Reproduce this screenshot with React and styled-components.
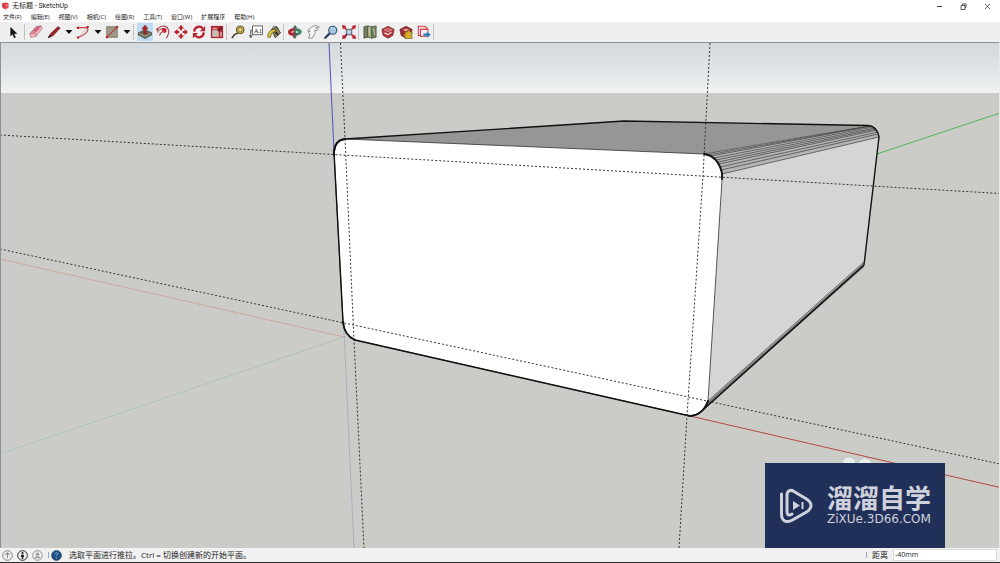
import React from "react";
import styled, { createGlobalStyle } from "styled-components";

const GlobalStyle = createGlobalStyle`
  * { box-sizing: border-box; }
  body { margin: 0; background: #ffffff; }
  button, input { font: inherit; color: inherit; }
`;

const Window = styled.div`
  display: flex;
  flex-direction: column;
  height: 100vh;
  font-family: "Open Sans", "Noto Sans CJK SC", sans-serif;
  color: #222222;
  border-bottom: 1px solid #2b2b2f;
`;

const TitleBar = styled.header`
  display: flex;
  align-items: center;
  gap: 3px;
  height: 12px;
  flex: none;
  padding: 0 1px;
  background: #ffffff;
`;

const Title = styled.h1`
  flex: 1;
  margin: 0;
  font-family: Roboto, "Noto Sans CJK SC", sans-serif;
  font-size: 7px;
  line-height: 12px;
  font-weight: 400;
`;

const WindowControls = styled.div`
  display: flex;
`;

const WindowButton = styled.button`
  display: grid;
  place-items: center;
  width: 24px;
  height: 12px;
  padding: 0;
  border: 0;
  background: transparent;
`;

const MenuBar = styled.nav`
  display: flex;
  gap: 9px;
  height: 10px;
  flex: none;
  padding-left: 3px;
  background: #ffffff;
`;

const MenuButton = styled.button`
  padding: 0;
  border: 0;
  background: transparent;
  font-size: 6px;
  line-height: 10px;
  white-space: nowrap;
`;

const ToolBar = styled.div`
  display: flex;
  align-items: center;
  height: 20px;
  flex: none;
  padding-left: 5px;
  background: #efefef;
`;

const ToolGroup = styled.div`
  display: flex;
  gap: 2px;
  padding-right: ${(p) => p.$end || 0}px;
`;

const Separator = styled.span`
  width: 1px;
  height: 16px;
  margin: 0 3px 0 1px;
  background: #c4c4c4;
`;

const ToolButton = styled.button`
  display: grid;
  place-items: center;
  width: ${(p) => (p.$narrow ? 9 : 16)}px;
  height: 18px;
  padding: 0;
  border: 0;
  background: ${(p) => (p.$active ? "#bfdcf3" : "transparent")};
`;

const Viewport = styled.main`
  position: relative;
  flex: 1;
  min-height: 0;
  border: solid #8f9294;
  border-width: 1px 0 0 1px;
  border-right: 1px solid #e9e9e8;
  background: #cbccc7;
`;

const Scene = styled.svg`
  display: block;
  width: 100%;
  height: 100%;
`;

const Brand = styled.aside`
  position: absolute;
  right: 54px;
  bottom: 0;
  display: flex;
  align-items: center;
  gap: 13px;
  width: 180px;
  height: 85px;
  padding-left: 14px;
  background: #213058;
  color: #cfd2dc;
`;

const BrandText = styled.div`
  display: flex;
  flex-direction: column;
  padding-bottom: 2px;
  gap: 3px;
`;

const BrandName = styled.strong`
  font-family: "Noto Sans CJK SC", sans-serif;
  font-size: 26px;
  line-height: 26px;
  font-weight: 700;
`;

const BrandSite = styled.span`
  font-family: "DejaVu Sans", sans-serif;
  font-size: 12px;
  line-height: 12px;
`;

const StatusBar = styled.footer`
  display: flex;
  align-items: center;
  height: 14px;
  flex: none;
  padding-right: 3px;
  background: #f1f1f2;
  font-size: 8px;
  line-height: 14px;
`;

const StatusButton = styled.button`
  display: grid;
  place-items: center;
  width: 15px;
  height: 14px;
  padding: 0;
  border: 0;
  background: transparent;
`;

const StatusMessage = styled.p`
  flex: 1;
  margin: 0;
  padding-left: 5px;
`;

const StatusDivider = styled.span`
  width: 1px;
  height: 6px;
  margin-left: 3px;
  background: #9aa5b5;
`;

const Measure = styled.label`
  display: flex;
  align-items: center;
  gap: 5px;
  padding-left: 5px;
`;

const MeasureInput = styled.input`
  width: 104px;
  height: 12px;
  padding: 0 1px;
  border: 1px solid #dcdcdc;
  background: #ffffff;
  font-size: 7px;
  outline: 0;
`;

const R = "#b8202c";

const art = {
  logo: (
    <>
      <path d="M2 3L9 1l6 2v8l-6 4-6-3z" fill="#d8232b" />
      <path d="M5 5l5-1 3 1-4 2v2l4-2v3l-4 3-4-2" fill="none" stroke="#fff" strokeWidth="1" opacity=".7" />
    </>
  ),
  select: <path d="M5 2v11l2.500-2.300L9.200 15l2-.9-1.800-4H13z" fill="#151515" />,
  eraser: (
    <>
      <path d="M1 10L8 2l6-1 1 3-7 9-6 1z" fill="#d98a98" stroke="#8d4a58" strokeWidth=".8" />
      <path d="M1.500 10.500L7 10l7.500-8.500L15 4l-7 9-6 1z" fill="#efb3be" />
      <path d="M7 10l1 3" stroke="#a3606d" strokeWidth=".7" />
      <path d="M5 7.500L9.500 3l3-.5L8 7.500z" fill="#c6566d" />
    </>
  ),
  pencil: (
    <>
      <path d="M2 14l2-4 8.500-8 2.500 1.500L7 12z" fill="#a3202a" stroke="#571318" strokeWidth=".8" />
      <path d="M1 15l1.500-3.500L5 13.500z" fill="#1a1a1a" />
    </>
  ),
  arc: (
    <>
      <path d="M2 3h9c6 1 1 8-8 11" fill="none" stroke="#c63b46" strokeWidth="1.300" />
      <path d="M13 3L3 14" stroke="#b58a8a" strokeWidth=".7" />
      <path d="M1 2h2.500v2.500H1zM12 1h2.500v2.500H12zM1 13h2.500v2.500H1z" fill={R} />
    </>
  ),
  rect: (
    <>
      <path d="M2 2h12v12H2z" fill="#9f9a8b" stroke="#77715e" />
      <path d="M2 14L14 2" stroke={R} strokeWidth="1.200" />
      <path d="M1 12.500h2.500V15H1zM12.500 1H15v2.500h-2.500z" fill={R} />
    </>
  ),
  push: (
    <>
      <path d="M0 9l8-3.500L16 9v2l-8 4.500L0 11z" fill="#6f6a55" stroke="#35342b" strokeWidth=".7" />
      <path d="M1 9.500l7 3.500 7-3.500" fill="none" stroke="#c4bea5" strokeWidth=".8" />
      <path d="M8 0l3.500 4.500H9.500V10h-3V4.500h-2z" fill={R} stroke="#641018" strokeWidth=".5" />
    </>
  ),
  follow: (
    <>
      <path d="M1 6c3-6 11-6 13-1s-1 7-2 10" fill="none" stroke="#a8464d" strokeWidth="1.300" />
      <path d="M2 9c2-5 6-6 9-4" fill="none" stroke="#998b83" strokeWidth="1.300" />
      <path d="M4 12c1-3 3-5 6-4" fill="none" stroke="#a8464d" strokeWidth="1.300" />
      <path d="M6 5c3-3 7-1 6 2s-3 2-4 1z" fill="#cf2430" />
      <path d="M0 4l3 0-1 4z" fill={R} />
    </>
  ),
  move: (
    <>
      <path d="M8 0l3.500 4h-7zM8 16l3.500-4h-7zM0 8l4-3.500v7zM16 8l-4-3.500v7z" fill={R} />
      <path d="M8 3v3M8 10v3M3 8h3M10 8h3" stroke={R} strokeWidth="2.400" />
    </>
  ),
  rotate: (
    <>
      <path d="M2.500 7.500c.5-6 7.500-7 9.500-3.500M13.500 8.500c-.5 6-7.500 7-9.500 3.500" fill="none" stroke={R} strokeWidth="2.600" />
      <path d="M15 1v6H9zM1 15V9h6z" fill={R} />
    </>
  ),
  scale: (
    <>
      <path d="M1 1h14v14H1z" fill="#b02833" />
      <path d="M2.500 6H10v7.500H2.500z" fill="#c9beb1" />
      <path d="M3 3h5v2H3zM11.500 8h2v5h-2z" fill="#d9a4a4" />
      <path d="M9 7l4.500-4.500" stroke="#5e1118" strokeWidth="1.500" />
    </>
  ),
  tape: (
    <>
      <path d="M8 9l-4 2-3 4" fill="none" stroke="#463e22" strokeWidth="1.800" />
      <circle cx="10.500" cy="5.500" r="4.500" fill="#bda84c" stroke="#554920" />
      <circle cx="10.500" cy="5.500" r="2" fill="#ece1ad" stroke="#75682d" strokeWidth=".6" />
    </>
  ),
  text: (
    <>
      <path d="M4 1h11.500v10H4z" fill="#fff" stroke="#444" strokeWidth=".9" />
      <text x="5.500" y="9" fontFamily="Liberation Serif, serif" fontSize="8" fill="#222">A1</text>
      <path d="M4 6H2v8M.5 11.500L2 14.500l1.500-3" fill="none" stroke="#333" strokeWidth=".9" />
    </>
  ),
  paint: (
    <>
      <path d="M5 5l6-3 4.500 7-6 5.500z" fill="#8d8256" stroke="#39351f" />
      <path d="M1 14c-1-6 4-10 10-8.500L8 8l-3 2-1 4z" fill="#dcc63c" stroke="#474016" strokeWidth=".7" />
      <path d="M9.500 8l3 3" stroke="#222" strokeWidth="2" />
      <path d="M6 4c1-4 6-3 7 1" fill="none" stroke="#444" strokeWidth=".9" />
    </>
  ),
  orbit: (
    <>
      <path d="M9 4c8 0 9 7 0 8V9.500c4-.5 4-2.500 0-3z" fill="#3d8a67" stroke="#235541" strokeWidth=".5" />
      <path d="M7 4C-2 4-2 12 6 12v2.500l4-3.500-4-3.500v2C2 9 3 6.500 7 6.500z" fill={R} stroke="#641018" strokeWidth=".4" />
      <path d="M8 0l2.500 3.500H9V13H7V3.500H5.500z" fill="#4b5f58" />
      <path d="M6 13h4l-2 3z" fill="#4b5f58" />
    </>
  ),
  pan: (
    <path
      d="M2 6l5-4 4-1.500 4 1.500-.5 1.500L11 3l2.500 2.500-1 1L10 5.500l.5 4L7 15H3l1.500-4.500L3 8.500l2-2L2.500 7.500z"
      fill="#f9f8f5"
      stroke="#6b6865"
      strokeWidth=".8"
    />
  ),
  zoom: (
    <>
      <path d="M7 9l-5.500 5.500" stroke="#293c62" strokeWidth="2.600" strokeLinecap="round" />
      <circle cx="10" cy="6" r="4.600" fill="#a9c8e2" stroke="#395474" strokeWidth="1.300" />
    </>
  ),
  extents: (
    <>
      <path d="M7 9l-4 5" stroke="#32425c" strokeWidth="2" />
      <circle cx="8" cy="8" r="3.300" fill="#b8d0e0" stroke="#445b75" />
      <path d="M0 0l5 1-1.300 1.300L6 4.500 4.500 6 2.300 3.700 1 5zM16 0l-1 5-1.300-1.300L11.500 6 10 4.500l2.300-2.200L11 1zM16 16l-5-1 1.300-1.300-2.300-2.200 1.500-1.500 2.200 2.300L15 11zM0 16l1-5 1.300 1.300L4.500 10 6 11.500l-2.300 2.200L5 15z" fill={R} />
    </>
  ),
  map: (
    <>
      <path d="M1 2l4.500-1v13L1 15z" fill="#6f7f5b" stroke="#3e4c35" strokeWidth=".8" />
      <path d="M5.500 1l4.500 1v13l-4.500-1z" fill="#a3ab86" stroke="#3e4c35" strokeWidth=".8" />
      <path d="M10 2l5-1v13l-5 1z" fill="#75855f" stroke="#3e4c35" strokeWidth=".8" />
      <path d="M7 3v9M12 4l1.500 7" stroke="#d8d6b0" />
    </>
  ),
  warehouse: (
    <>
      <path d="M1 5l7-3.500L15 5l-1.500 7L8 15l-5.500-3z" fill="#b5323b" stroke="#66272b" strokeWidth=".8" />
      <path d="M3 5.500L8 3.500l5 2-5 2.500z" fill="#e2a49d" />
      <path d="M4 9l4 2 4-3" fill="none" stroke="#f4e4df" strokeWidth="1.300" />
      <path d="M6 5.500l4 .3" stroke="#8a1e26" strokeWidth="1.200" />
    </>
  ),
  extension: (
    <>
      <path d="M1 5l7-3.500L15 5l-1.500 7L8 15l-5.500-3z" fill="#a32b31" stroke="#5e2025" strokeWidth=".8" />
      <path d="M4 5.500l4-1.500 4 1.500-4 2z" fill="#dfa29a" />
      <path d="M7 8h2.500c-.5-2.500 3.500-2.500 3 0H15v3c-2 0-2 2 0 2v2.500H7V13c-2 .500-2-3 0-2.500z" fill="#d6af29" stroke="#674f16" strokeWidth=".7" />
    </>
  ),
  layout: (
    <>
      <path d="M1.500 1.500H9l3 2.500v8H1.500z" fill="#f7dfdf" stroke="#d6404b" strokeWidth="1.200" />
      <path d="M4 5h8.500v8H4z" fill="#fbeeee" stroke="#d6404b" strokeWidth="1.200" />
      <path d="M7 9.500h4V7l5 4-5 4v-2.500H7z" fill="#2878ba" stroke="#fff" strokeWidth=".4" />
    </>
  ),
  caret: <path d="M1 4h14L8 12z" fill="#111" />,
};

const Icon = ({ name, size = 14 }) => (
  <svg width={size} height={size} viewBox="0 0 16 16" aria-hidden="true">
    {art[name]}
  </svg>
);

const Tool = ({ name, label, active, narrow }) => (
  <ToolButton type="button" aria-label={label} $active={active} $narrow={narrow}>
    <Icon name={name} size={narrow ? 8 : 14} />
  </ToolButton>
);

const menus = ["文件(F)", "编辑(E)", "视图(V)", "相机(C)", "绘图(R)", "工具(T)", "窗口(W)", "扩展程序", "帮助(H)"];

const editTools = [["push", "推/拉"], ["follow", "路径跟随"], ["move", "移动"], ["rotate", "旋转"], ["scale", "缩放"]];
const markTools = [["tape", "卷尺"], ["text", "文字"], ["paint", "材质"]];
const cameraTools = [["orbit", "环绕观察"], ["pan", "平移"], ["zoom", "缩放视图"], ["extents", "充满视窗"]];
const libraryTools = [["map", "地图"], ["warehouse", "模型库"], ["extension", "扩展库"], ["layout", "布局"]];

const bevelLines = [
  [704, 154, 868, 126], [708, 155, 870, 126], [711, 156, 872, 126], [714, 158, 873, 127],
  [716, 160, 875, 128], [718, 162, 876, 129], [719, 164, 877, 130], [720, 167, 878, 132],
  [721, 170, 878, 134], [722, 174, 879, 137],
];

const guides = ["M0 135L1000 193.500", "M0 249L1000 464", "M340.500 43L345 139L354 340L364 548", "M710 43L703 176L687 416L679 548"];

const Model = () => (
  <Scene viewBox="1 43 998 505" preserveAspectRatio="xMidYMid slice" role="img" aria-label="圆角长方体模型">
    <defs>
      <linearGradient id="sky" x1="0" y1="0" x2="0" y2="1">
        <stop offset="0" stopColor="#d3d9dc" />
        <stop offset=".6" stopColor="#e1e6e8" />
        <stop offset="1" stopColor="#f1f3f2" />
      </linearGradient>
    </defs>
    <path d="M0 43h1000v50H0z" fill="url(#sky)" />
    <path d="M0 93h1000v455H0z" fill="#cbccc7" />
    <g fill="none" strokeWidth="1">
      <path d="M329 43L334 152" stroke="#5552b4" />
      <path d="M344 330L354 548" stroke="#8f8fb8" strokeDasharray="1 1" />
      <path d="M0 259L344 337" stroke="#cf857e" strokeDasharray="1 1" />
      <path d="M690 416L1000 487.500" stroke="#b94744" />
      <path d="M344 337L0 454" stroke="#93b9ad" strokeDasharray="1 1" />
      <path d="M877 154L1000 113" stroke="#55b455" />
    </g>
    <path d="M345 139L624 121L868 125.500L704 155z" fill="#969696" />
    <path d="M704 154L868 125.500Q877 126 879 137L864 265L707 406L722 180z" fill="#d5d5d5" />
    <path d="M704 154L868 125.500Q877 126 879 137L722 174Q718 157 704 154z" fill="#b4b4b4" />
    <path d="M864 263L708 402L700 413L864 267z" fill="#777777" />
    <g stroke="#3d3d3d" strokeWidth=".7">
      {bevelLines.map(([x1, y1, x2, y2]) => (
        <line key={y1} x1={x1} y1={y1} x2={x2} y2={y2} />
      ))}
    </g>
    <path
      d="M345 139L704 154Q718 156 722 173V180L708 401Q703 415 690 416L355 340Q344 335 343 322L334 152Q335 140 345 139z"
      fill="#ffffff"
      stroke="#303030"
      strokeWidth=".8"
    />
    <g fill="none" stroke="#111111" strokeWidth="1.400" strokeLinecap="round" strokeLinejoin="round">
      <path d="M345 139L624 121L868 125.500Q877 126 879 137L864 265L704 409" />
      <path d="M345 139Q335 140 334 152L343 322Q344 335 355 340L690 416Q703 415 708 401" />
      <path d="M704 154Q718 156 722 173V179" strokeWidth="1.800" />
      <path d="M334 155V152Q335 140 345 139M343 322Q344 335 355 340M687 415L690 416Q703 415 708 401" strokeWidth="1.800" />
      <path d="M864 262L708 401" strokeWidth=".6" />
    </g>
    <g fill="none" stroke="#333333" strokeWidth="1" strokeDasharray="2 2">
      {guides.map((d) => (
        <path key={d} d={d} />
      ))}
    </g>
    <g fill="#e8eeee" stroke="#b3bfbe" strokeWidth=".7">
      <circle cx="849" cy="464" r="7" />
      <circle cx="865" cy="465" r="7" />
    </g>
  </Scene>
);

const Round = ({ fill = "none", stroke, children }) => (
  <svg width="11" height="11" viewBox="0 0 16 16" aria-hidden="true">
    <circle cx="8" cy="8" r="7" fill={fill} stroke={stroke} strokeWidth="1.300" />
    {children}
  </svg>
);

export default function App() {
  return (
    <Window>
      <GlobalStyle />
      <TitleBar>
        <Icon name="logo" size={8} />
        <Title>无标题 - SketchUp</Title>
        <WindowControls>
          <WindowButton type="button" aria-label="最小化">
            <svg width="7" height="7" viewBox="0 0 7 7"><path d="M1 3.500h5" stroke="#444" /></svg>
          </WindowButton>
          <WindowButton type="button" aria-label="还原">
            <svg width="7" height="7" viewBox="0 0 7 7"><path d="M1 2.500h4v4H1zM2.500 2V1H6v3.500H5" fill="none" stroke="#333" strokeWidth=".8" /></svg>
          </WindowButton>
          <WindowButton type="button" aria-label="关闭">
            <svg width="7" height="7" viewBox="0 0 7 7"><path d="M1 1l5 5M6 1L1 6" stroke="#444" strokeWidth=".8" /></svg>
          </WindowButton>
        </WindowControls>
      </TitleBar>
      <MenuBar>
        {menus.map((m) => (
          <MenuButton type="button" key={m}>{m}</MenuButton>
        ))}
      </MenuBar>
      <ToolBar role="toolbar">
        <ToolGroup $end={2}><Tool name="select" label="选择" /></ToolGroup>
        <Separator />
        <ToolGroup $end={1}>
          <Tool name="eraser" label="橡皮擦" />
          <Tool name="pencil" label="直线" />
          <Tool name="caret" label="直线选项" narrow />
          <Tool name="arc" label="圆弧" />
          <Tool name="caret" label="圆弧选项" narrow />
          <Tool name="rect" label="矩形" />
          <Tool name="caret" label="矩形选项" narrow />
        </ToolGroup>
        <Separator />
        <ToolGroup>
          {editTools.map(([n, l]) => <Tool key={n} name={n} label={l} active={n === "push"} />)}
        </ToolGroup>
        {[markTools, cameraTools, libraryTools].map((group) => (
          <React.Fragment key={group[0][0]}>
            <Separator />
            <ToolGroup>{group.map(([n, l]) => <Tool key={n} name={n} label={l} />)}</ToolGroup>
          </React.Fragment>
        ))}
        <Separator />
      </ToolBar>
      <Viewport>
        <Model />
        <Brand>
          <svg width="35" height="36" viewBox="0 0 35 36" fill="none" stroke="#cfd2dc" strokeWidth="3" aria-hidden="true">
            <path d="M2.500 6v20c0 8 6 9 11 6l14-8c6-4 6-9 0-13L15 3.500C11 1 8 3 8 7v17c0 3 2 4 5 2" strokeLinecap="round" strokeLinejoin="round" />
            <path d="M14 13v9l7-4.500z" fill="#cfd2dc" stroke="none" />
            <path d="M23.500 14v7" strokeWidth="2" />
          </svg>
          <BrandText>
            <BrandName>溜溜自学</BrandName>
            <BrandSite>ZiXUe.3D66.COM</BrandSite>
          </BrandText>
        </Brand>
      </Viewport>
      <StatusBar>
        <StatusButton type="button" aria-label="地理位置">
          <Round stroke="#777"><path d="M8 12V5M5 7l3-3 3 3" fill="none" stroke="#888" strokeWidth="1.500" /></Round>
        </StatusButton>
        <StatusButton type="button" aria-label="版权信息">
          <Round stroke="#111"><circle cx="8" cy="4.500" r="1.500" fill="#111" /><path d="M6 7h4v3H9v3H7v-3H6z" fill="#111" /></Round>
        </StatusButton>
        <StatusButton type="button" aria-label="登录">
          <Round stroke="#888"><circle cx="8" cy="6" r="2.500" fill="#999" /><path d="M3.500 12c1-4 8-4 9 0z" fill="#999" /></Round>
        </StatusButton>
        <StatusDivider />
        <StatusButton type="button" aria-label="帮助">
          <Round fill="#205488" stroke="#123a65"><path d="M6 6c0-3 5-2 4 0-.5 1-2 1-2 3M8 11v1.500" fill="none" stroke="#9dbad6" strokeWidth="1.200" /></Round>
        </StatusButton>
        <StatusMessage>选取平面进行推拉。Ctrl = 切换创建新的开始平面。</StatusMessage>
        <StatusDivider />
        <Measure>
          距离
          <MeasureInput type="text" defaultValue="-40mm" />
        </Measure>
      </StatusBar>
    </Window>
  );
}
